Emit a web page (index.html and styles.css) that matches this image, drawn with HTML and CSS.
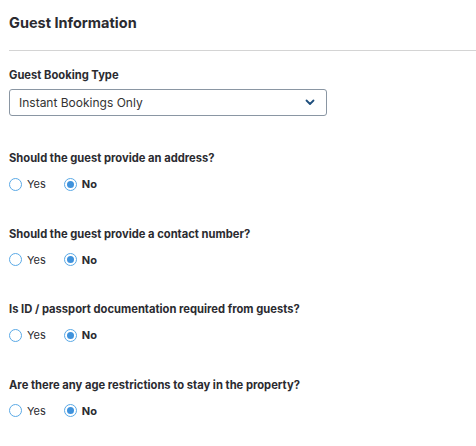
FILE: index.html
```html
<!DOCTYPE html>
<html>
<head>
    <meta charset="UTF-8">
    <title>Guest Information</title>
    <link rel="stylesheet" href="styles.css">
</head>
<body>
    <div class="panel">
        <h2 class="panel-title">Guest Information</h2>

        <div class="field">
            <label class="field-label">Guest Booking Type</label>
            <div class="select">
                <span>Instant Bookings Only</span>
                <svg class="chevron" width="10" height="7" viewBox="0 0 10 7">
                    <path d="M1.5 1.5 L5 5 L8.5 1.5" fill="none" stroke="#1f4f7d" stroke-width="1.8" stroke-linecap="round" stroke-linejoin="round"/>
                </svg>
            </div>
        </div>

        <div class="question">
            <div class="field-label">Should the guest provide an address?</div>
            <div class="radios">
                <label class="radio"><span class="dot"></span>Yes</label>
                <label class="radio checked"><span class="dot"></span>No</label>
            </div>
        </div>

        <div class="question">
            <div class="field-label">Should the guest provide a contact number?</div>
            <div class="radios">
                <label class="radio"><span class="dot"></span>Yes</label>
                <label class="radio checked"><span class="dot"></span>No</label>
            </div>
        </div>

        <div class="question">
            <div class="field-label">Is ID / passport documentation required from guests?</div>
            <div class="radios">
                <label class="radio"><span class="dot"></span>Yes</label>
                <label class="radio checked"><span class="dot"></span>No</label>
            </div>
        </div>

        <div class="question">
            <div class="field-label">Are there any age restrictions to stay in the property?</div>
            <div class="radios">
                <label class="radio"><span class="dot"></span>Yes</label>
                <label class="radio checked"><span class="dot"></span>No</label>
            </div>
        </div>
    </div>
</body>
</html>
```

FILE: styles.css
```css
body {
    margin: 0;
    background: #ffffff;
    font-family: Inter, "Open Sans", sans-serif;
    color: #2b2b30;
}
.panel {
    padding: 14px 0 0 9px;
}
.panel-title {
    font-size: 14.5px;
    font-weight: bold;
    margin: 0;
    padding-bottom: 19px;
    border-bottom: 1px solid #d4d4d4;
}
.field {
    margin-top: 17px;
}
.field-label {
    display: block;
    font-size: 11.2px;
    font-weight: bold;
    margin-bottom: 7px;
}
.select {
    width: 296px;
    height: 25px;
    border: 1px solid #8a96a3;
    border-radius: 3px;
    display: flex;
    align-items: center;
    justify-content: space-between;
    padding: 0 11px 0 9px;
    font-size: 12px;
    color: #333333;
}
.question {
    margin-top: 35.4px;
}
.question .field-label {
    margin-bottom: 12px;
}
.radios {
    display: flex;
    gap: 18px;
}
.radio {
    display: flex;
    align-items: center;
    gap: 5px;
    font-size: 11px;
}
.radio.checked {
    font-weight: bold;
}
.dot {
    width: 11px;
    height: 11px;
    border: 1px solid #5aa9e6;
    border-radius: 50%;
    display: inline-flex;
    align-items: center;
    justify-content: center;
}
.radio.checked .dot::after {
    content: "";
    width: 7px;
    height: 7px;
    border-radius: 50%;
    background: #3f92dc;
}
```
